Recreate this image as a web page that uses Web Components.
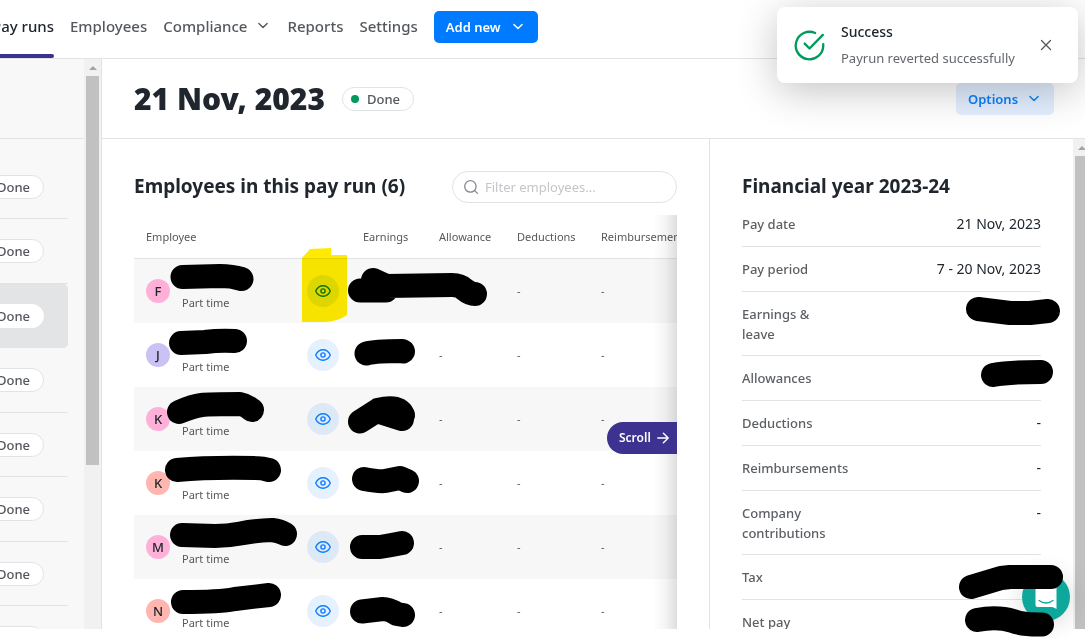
<!DOCTYPE html>
<html lang="en">
<head>
<meta charset="utf-8">
<title>Pay runs</title>
<style>
  html, body { margin: 0; height: 100%; }
  body {
    font-family: "Noto Sans", "Open Sans", sans-serif;
    color: #20262e;
    background: #fff;
    overflow: hidden;
    --ink: #20262e;
    --muted: #54585d;
    --line: #e2e3e4;
    --soft: #f7f7f7;
    --blue: #007aff;
    --green: #009a5a;
    --violet: #3d328f;
  }
</style>
</head>
<body>
<pay-app></pay-app>

<script>
const define = (name, html, setup) => {
  const template = document.createElement('template');
  template.innerHTML = html;
  customElements.define(name, class extends HTMLElement {
    constructor() {
      super();
      this.attachShadow({ mode: 'open' }).append(template.content.cloneNode(true));
    }
    connectedCallback() {
      if (setup && !this.ready) { this.ready = true; setup(this, this.shadowRoot); }
    }
  });
};

define('chevron-icon', `
  <style>:host { display: block; } svg { display: block; }</style>
  <svg width="12" height="12" viewBox="0 0 12 12" fill="none" stroke="currentColor" stroke-width="1.4" stroke-linecap="round" stroke-linejoin="round"><path d="M1.900 3.500 6 7.600l4.100-4.100"/></svg>
`);

define('scroll-bar', `
  <style>
    :host { display: flex; flex-direction: column; align-items: center; flex: none; width: 17px; background: #f1f1f1; }
    .arrow { flex: none; height: 17px; display: flex; align-items: center; }
    .thumb { width: 13px; height: var(--thumb, 100%); background: #c1c1c1; }
  </style>
  <div class="arrow"><svg width="8" height="4" viewBox="0 0 8 4"><path d="M0 4 4 0l4 4z" fill="#a3a3a3"/></svg></div>
  <div class="thumb"></div>
`);

define('status-pill', `
  <style>
    :host { display: flex; align-items: center; gap: 8px; flex: none; box-sizing: border-box; width: 72px; height: 24px; padding-left: 8px;
      border: 1px solid var(--line); border-radius: 12px; background: #fff; color: var(--muted); font-size: 13px; line-height: 20px; font-weight: 500; }
    i { width: 8px; height: 8px; border-radius: 50%; background: var(--green); }
  </style>
  <i></i><slot></slot>
`);

define('top-bar', `
  <style>
    :host { display: flex; flex: none; align-items: center; gap: 16px; height: 58px; border-bottom: 1px solid var(--line); }
    nav { display: flex; align-items: center; gap: 16px; height: 100%; padding-bottom: 6px; box-sizing: border-box; }
    a { display: flex; align-items: center; gap: 10px; color: var(--muted); font-size: 15px; line-height: 24px; text-decoration: none; white-space: nowrap; font-weight: 500; }
    a.more { padding-right: 2px; }
    .first { position: relative; width: 54px; height: 58px; overflow: hidden; justify-content: flex-end; color: var(--ink); box-sizing: border-box; margin-top: 6px; padding-bottom: 6px; }
    .first::after { content: ""; position: absolute; inset: auto 0 0 0; height: 4px; background: var(--violet); border-radius: 0 3px 3px 0; }
    button { display: flex; align-items: center; justify-content: space-between; width: 104px; height: 32px; margin-bottom: 4px; padding: 0 14px 0 12px; border: 0; border-radius: 5px; background: var(--blue); color: #fff; font: 600 13px/20px "Noto Sans", sans-serif; }
  </style>
  <nav aria-label="Main">
    <a class="first" href="#pay-runs">Pay runs</a>
    <a href="#employees">Employees</a>
    <a class="more" href="#compliance">Compliance <chevron-icon></chevron-icon></a>
    <a href="#reports">Reports</a>
    <a href="#settings">Settings</a>
  </nav>
  <button type="button">Add new <chevron-icon></chevron-icon></button>
`);

define('run-list', `
  <style>
    :host { display: flex; flex: none; width: 101px; border-right: 1px solid var(--line); background: #f8f8f8; }
    .content { flex: 1; min-width: 0; overflow: hidden; }
    .head { height: 79px; border-bottom: 1px solid var(--line); }
    ul { list-style: none; margin: 0; padding: 16px 16px 0 0; }
    li { display: flex; align-items: center; justify-content: flex-end; box-sizing: border-box; height: 64px; padding-right: 24px; border-bottom: 1px solid var(--line); }
    li:nth-child(even) { height: 65px; }
    li.on { background: #e3e4e6; border-radius: 0 5px 5px 0; }
    li.on status-pill { border-color: #fff; }
    scroll-bar { --thumb: 389px; }
  </style>
  <div class="content">
    <div class="head"></div>
    <ul></ul>
  </div>
  <scroll-bar></scroll-bar>
`, (host, root) => {
  root.querySelector('ul').innerHTML = Array.from({ length: 8 }, (_, i) =>
    `<li${i === 2 ? ' class="on"' : ''}><status-pill>Done</status-pill></li>`).join('');
});

define('page-head', `
  <style>
    :host { display: flex; flex: none; align-items: center; gap: 17px; height: 79px; padding: 0 31px 0 32px; border-bottom: 1px solid var(--line); }
    h1 { margin: 0; font-size: 30px; line-height: 40px; font-weight: 900; white-space: nowrap; }
    button { display: flex; align-items: center; justify-content: space-between; width: 98px; height: 32px; margin-left: auto; padding: 0 14px 0 12px; border: 0; border-radius: 5px; background: #e3efff; color: #0a7fff; font: 600 13px/20px "Noto Sans", sans-serif; }
  </style>
  <h1><slot></slot></h1>
  <status-pill>Done</status-pill>
  <button type="button">Options <chevron-icon></chevron-icon></button>
`);

define('search-box', `
  <style>
    :host { display: block; flex: none; width: 225px; }
    label { display: flex; align-items: center; gap: 7px; box-sizing: border-box; height: 32px; padding: 0 11px; border: 1px solid var(--line); border-radius: 16px; }
    svg { flex: none; }
    input { flex: 1; min-width: 0; padding: 0; border: 0; outline: 0; background: none; font: 400 13px/20px "Noto Sans", sans-serif; }
    input::placeholder { color: #c3c6c9; opacity: 1; }
  </style>
  <label>
    <svg width="14" height="14" viewBox="0 0 14 14" fill="none" stroke="#85898d" stroke-width="1.3" stroke-linecap="round"><circle cx="6.4" cy="6.4" r="5.7"/><path d="m10.6 10.6 2.8 2.8"/></svg>
    <input type="search" aria-label="Filter employees" placeholder="Filter employees...">
  </label>
`);

define('employee-table', `
  <style>
    :host { display: block; position: relative; flex: 1; min-height: 0; overflow: hidden; }
    table { width: 585px; table-layout: fixed; border-collapse: separate; border-spacing: 0; font-size: 11px; line-height: 16px; color: var(--muted); }
    th { height: 43px; padding: 0 12px; box-sizing: content-box; border-bottom: 1px solid var(--line); text-align: left; font-weight: 400; }
    td { height: 64px; padding: 0 12px; box-sizing: border-box; }
    tbody tr:nth-child(odd) { background: var(--soft); }
    .who { display: flex; align-items: center; gap: 12px; }
    .avatar { width: 24px; height: 24px; border-radius: 50%; text-align: center; line-height: 24px; font-size: 13px; font-weight: 500; color: #22252a; }
    .type { padding-top: 24px; }
    button { display: flex; align-items: center; justify-content: center; width: 32px; height: 32px; margin-left: auto; padding: 0; border: 0; border-radius: 50%; background: rgba(0, 122, 255, .1); }
    .fade { position: absolute; inset: 0 0 0 auto; width: 24px; background: linear-gradient(to right, rgba(0,0,0,0), rgba(0,0,0,.04) 50%, rgba(0,0,0,.13)); }
    .scroll { position: absolute; right: 0; top: 207px; gap: 6px; justify-content: flex-start; width: 70px; padding-left: 12px; border-radius: 16px 0 0 16px; background: var(--violet); color: #fff; font: 600 12px/16px "Noto Sans", sans-serif; }
  </style>
  <table>
    <colgroup><col style="width:217px"><col style="width:76px"><col style="width:78px"><col style="width:84px"><col></colgroup>
    <thead><tr><th>Employee</th><th>Earnings</th><th>Allowance</th><th>Deductions</th><th>Reimbursements</th></tr></thead>
    <tbody></tbody>
  </table>
  <div class="fade"></div>
  <button class="scroll" type="button">Scroll
    <svg width="12" height="12" viewBox="0 0 12 12" fill="none" stroke="#fff" stroke-width="1.4" stroke-linecap="round" stroke-linejoin="round"><path d="M.8 6h10.4M6.4 1.2 11.2 6l-4.8 4.8"/></svg>
  </button>
`, (host, root) => {
  const people = [['F', '#ffb0d8'], ['J', '#cac1f5'], ['K', '#ffb0d8'], ['K', '#ffb5b0'], ['M', '#ffb0d8'], ['N', '#ffb5b0']];
  root.querySelector('tbody').innerHTML = people.map(([letter, color]) => `
    <tr><td><div class="who"><span class="avatar" style="background:${color}">${letter}</span><span class="type">Part time</span>
      <button type="button" aria-label="View payslip"><svg width="16" height="12" viewBox="0 0 16 12" fill="none" stroke="#0a7fff" stroke-width="1.4"><path d="M.7 6C2.2 2.700 4.800.8 8 .8S13.800 2.700 15.300 6C13.800 9.300 11.200 11.200 8 11.200S2.200 9.300.7 6z" stroke-linejoin="round"/><circle cx="8" cy="6" r="2.100"/></svg></button></div></td>
    <td></td><td>-</td><td>-</td><td>-</td></tr>`).join('');
});

define('employee-panel', `
  <style>
    :host { display: flex; flex-direction: column; flex: 1; min-width: 0; padding: 32px 32px 0; border-right: 1px solid var(--line); }
    header { display: flex; align-items: flex-start; justify-content: space-between; margin-bottom: 12px; }
    h2 { margin: 0; font-size: 19px; line-height: 30px; font-weight: 700; white-space: nowrap; }
  </style>
  <header><h2>Employees in this pay run (6)</h2><search-box></search-box></header>
  <employee-table></employee-table>
`);

define('summary-row', `
  <style>
    :host { display: flex; justify-content: space-between; box-sizing: border-box; min-height: 45px; padding: 12px 0 11px; border-bottom: 1px solid var(--line); font-size: 13px; line-height: 20px; font-weight: 500; color: #5c6065; }
    .label { max-width: 110px; }
    .value { color: var(--ink); font-size: 14px; font-weight: 400; }
  </style>
  <div class="label"><slot></slot></div><div class="value"><slot name="value"></slot></div>
`);

define('summary-panel', `
  <style>
    :host { display: flex; flex: none; width: 375px; overflow: hidden; }
    section { flex: none; box-sizing: border-box; width: 363px; padding: 32px 32px 0; }
    h2 { margin: 0 0 1px; font-size: 19px; line-height: 30px; font-weight: 700; white-space: nowrap; }
    scroll-bar { --thumb: 100%; }
  </style>
  <section>
    <h2>Financial year 2023-24</h2>
    <summary-row>Pay date<span slot="value">21 Nov, 2023</span></summary-row>
    <summary-row>Pay period<span slot="value">7 - 20 Nov, 2023</span></summary-row>
    <summary-row>Earnings &amp;<br>leave</summary-row>
    <summary-row>Allowances</summary-row>
    <summary-row>Deductions<span slot="value">-</span></summary-row>
    <summary-row>Reimbursements<span slot="value">-</span></summary-row>
    <summary-row>Company<br>contributions<span slot="value">-</span></summary-row>
    <summary-row>Tax</summary-row>
    <summary-row>Net pay</summary-row>
  </section>
  <scroll-bar></scroll-bar>
`);

define('toast-message', `
  <style>
    :host { position: absolute; top: 7px; right: 7px; display: flex; align-items: center; box-sizing: border-box; width: 301px; height: 76px; padding: 0 26px 0 16px; border-radius: 8px; background: #fff; box-shadow: 0 8px 40px rgba(0,0,0,.24); }
    .text { flex: 1; margin-left: 15px; }
    strong, span { display: block; white-space: nowrap; }
    strong { font-size: 14px; line-height: 26px; font-weight: 500; }
    span { font-size: 13px; line-height: 26px; color: #63676c; }
    button { display: block; padding: 0; border: 0; background: none; }
    svg { display: block; }
  </style>
  <svg width="33" height="33" viewBox="0 0 24 24" fill="none" stroke="#009a5a" stroke-width="1.7" stroke-linecap="round" stroke-linejoin="round"><path d="M22 11.100V12a10 10 0 1 1-5.900-9.100M21.700 4.300 12 14.200 8.500 10.600"/></svg>
  <div class="text" role="status"><strong>Success</strong><span>Payrun reverted successfully</span></div>
  <button type="button" aria-label="Close"><svg width="12" height="12" viewBox="0 0 12 12" stroke="#54585d" stroke-width="1.300" stroke-linecap="round"><path d="m1.500 1.500 9 9m0-9-9 9"/></svg></button>
`);

define('chat-launcher', `
  <style>
    :host { position: absolute; right: 15px; bottom: 18px; display: block; }
    button { display: flex; align-items: center; justify-content: center; width: 48px; height: 48px; padding: 0; border: 0; border-radius: 50%; background: #0da89b; box-shadow: 0 2px 24px rgba(0,0,0,.16); }
  </style>
  <button type="button" aria-label="Open chat"><svg width="22" height="24" viewBox="0 0 22 24"><path d="M2.500 0h17Q21.500 0 21.500 2v22q-3-1.800-5-2h-14Q.5 22 .5 20V2Q.5 0 2.500 0z" fill="#fff"/><path d="M4 15.500q7 5 14 0" fill="none" stroke="#0da89b" stroke-width="1.300" stroke-linecap="round"/></svg></button>
`);

/* Marker strokes that hide names and amounts, plus the highlighter over the first view button. */
define('marker-layer', `
  <style>
    :host { position: absolute; inset: 0; pointer-events: none; mix-blend-mode: multiply; }
    svg { display: block; width: 100%; height: 100%; }
  </style>
  <svg aria-hidden="true">
    <path d="M302 258l8-9 21-1v7h16v60q-10 7-23 7h-22z" fill="#ffeb00"/>
    <g fill="none" stroke="#000" stroke-width="24" stroke-linecap="round" stroke-linejoin="round">
      <path d="M182.500 277 220 276q12 0 21.500 3"/>
      <path d="M181 343 205 342q15-2 30-1"/>
      <path d="M179 412C198 404 200 404 240 404q6 1 12 6"/>
      <path d="M177 470q33-3 78-2 8 0 14 2"/>
      <path d="M182 535l33 1c25 0 25-5 57-6q8 1 13 4"/>
      <path d="M183 602q37 0 52-3l34-4"/>
      <path d="M360 290.500h26M373 280l13 6 66-1q8 0 12 4 6 5 11 5"/>
      <path d="M366.500 353.500Q375 351 402 351l1 .5"/>
      <path d="M360 421.500 378 410q20-5 25 5M380 412l22 7"/>
      <path d="M364 479q16 3 21 2l15-3 7 3"/>
      <path d="M362 547h18q12-2 22-4"/>
      <path d="M362 611.500 383 609q6 0 14 5l6 1"/>
      <path d="M978 309l32 4h20l18-2"/>
      <path d="M993 375q17-3 48-3"/>
      <path d="M971 587l30-9 9-1h41"/>
      <path d="M977 620q20-4 36 1 10 4 29 3.500"/>
    </g>
  </svg>
`);

define('pay-app', `
  <style>
    :host { position: relative; display: flex; flex-direction: column; box-sizing: border-box; height: 100vh; padding-bottom: 10px; overflow: hidden; isolation: isolate; background: #fff; }
    .body { display: flex; flex: 1; min-height: 0; overflow: hidden; }
    main { display: flex; flex-direction: column; flex: 1; min-width: 0; }
    .columns { display: flex; flex: 1; min-height: 0; overflow: hidden; }
  </style>
  <top-bar></top-bar>
  <div class="body">
    <run-list></run-list>
    <main>
      <page-head>21 Nov, 2023</page-head>
      <div class="columns"><employee-panel></employee-panel><summary-panel></summary-panel></div>
    </main>
  </div>
  <toast-message></toast-message>
  <chat-launcher></chat-launcher>
  <marker-layer></marker-layer>
`);
</script>
</body>
</html>
